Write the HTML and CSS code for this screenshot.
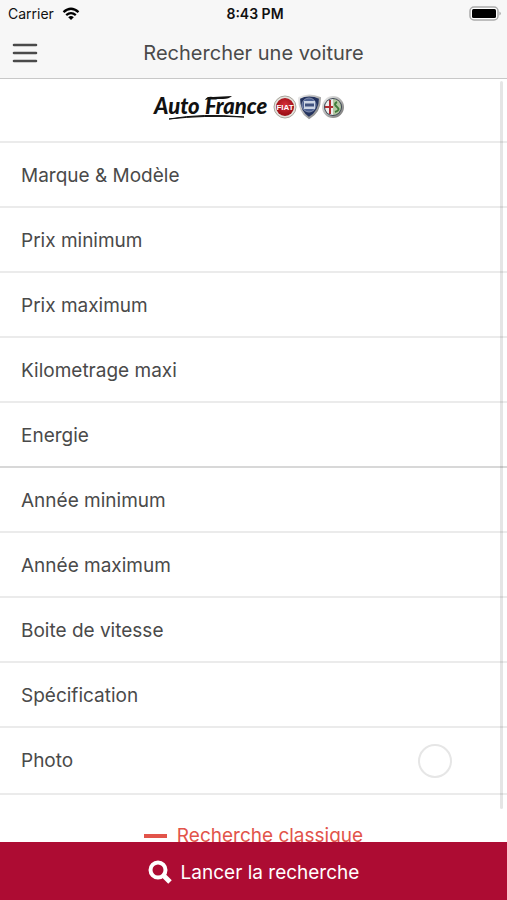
FILE: index.html
```
<!DOCTYPE html>
<html lang="fr">
<head>
    <meta charset="UTF-8">
    <meta name="viewport" content="width=device-width, initial-scale=1.0">
    <title>Rechercher une voiture</title>
    <link rel="stylesheet" href="styles.css">
</head>
<body>
    <header class="header">
        <div class="status-bar">
            <div class="carrier">
                <span>Carrier</span>
                <svg width="18" height="14" viewBox="0 0 18 14" aria-hidden="true">
                    <path d="M1.5 5.2Q9-1.6 16.5 5.2M4.2 8.2Q9 4 13.8 8.2" fill="none" stroke="#000" stroke-width="2.3"/>
                    <path d="M6.2 10.2Q9 8 11.8 10.2L9 13Z"/>
                </svg>
            </div>
            <div class="clock">8:43 PM</div>
            <div class="battery">
                <svg width="33" height="15" viewBox="0 0 33 15" aria-hidden="true">
                    <rect x="1" y="1" width="28" height="13" rx="4" fill="#fff" stroke="#aaa" stroke-width="1.5"/>
                    <rect x="3" y="3" width="24" height="9" rx="1.5"/>
                    <path d="M30.5 5.5Q33 7.5 30.5 9.5Z" fill="#999"/>
                </svg>
            </div>
        </div>
        <div class="nav-bar">
            <button class="menu-button" type="button" aria-label="Menu">
                <svg width="26" height="20" viewBox="0 0 26 20">
                    <path d="M2 2H24M2 10H24M2 18H24" stroke="#4a4a4a" stroke-width="2.6" stroke-linecap="round"/>
                </svg>
            </button>
            <h1 class="title">Rechercher une voiture</h1>
        </div>
    </header>

    <main class="content">
        <div class="brand">
            <svg class="brand-logo" width="192" height="28" viewBox="0 0 192 28" role="img" aria-label="Auto France">
                <defs>
                    <radialGradient id="red" cx="50%" cy="40%">
                        <stop offset="0" stop-color="#d8303a"/>
                        <stop offset="1" stop-color="#a01018"/>
                    </radialGradient>
                    <linearGradient id="chrome" x2="1" y2="1">
                        <stop offset="0" stop-color="#eee"/>
                        <stop offset="1" stop-color="#777"/>
                    </linearGradient>
                </defs>
                <text class="brand-name" x="1" y="21">Auto</text>
                <text class="brand-name" x="52" y="21">France</text>
                <path d="M52 7Q54 3 60 4L79 3Q76 6 70 6L56 6Z" fill="#111"/>
                <path d="M16 26Q50 20 91 24Q50 22 16 26Z" fill="#111" stroke="#111"/>
                <!-- Fiat -->
                <circle cx="132" cy="14" r="11" fill="#e4e2dc" stroke="#aaa69e"/>
                <circle cx="132" cy="14" r="9" fill="url(#red)"/>
                <text class="fiat" x="132" y="17" text-anchor="middle">FIAT</text>
                <!-- Lancia -->
                <path d="M146 5Q156 0 167 5Q167 19 156 25Q146 19 146 5Z" fill="#25345f" stroke="url(#chrome)" stroke-width="2"/>
                <circle cx="156" cy="12" r="7" fill="#4f6293" stroke="#8490b0"/>
                <path d="M151 8H162V16H151Z" fill="#cdd5e4"/>
                <path d="M152 12H161" stroke="#40517e" stroke-width="3"/>
                <!-- Alfa Romeo -->
                <circle cx="180" cy="14" r="10" fill="#3c4652" stroke="url(#chrome)" stroke-width="2"/>
                <path d="M180 6A8 8 0 0 0 180 22Z" fill="#eee"/>
                <path d="M180 6A8 8 0 0 1 180 22Z" fill="#b5c8a4"/>
                <path d="M177 7V21M172 14H180" stroke="#b02c32" stroke-width="2"/>
                <path d="M184 9Q180 11 184 14T182 19" fill="none" stroke="#3f7b3b" stroke-width="2"/>
            </svg>
        </div>

        <form id="search-form" class="criteria">
            <button class="row" type="button">Marque &amp; Modèle</button>
            <button class="row" type="button">Prix minimum</button>
            <button class="row" type="button">Prix maximum</button>
            <button class="row" type="button">Kilometrage maxi</button>
            <button class="row row-group-end" type="button">Energie</button>
            <button class="row" type="button">Année minimum</button>
            <button class="row" type="button">Année maximum</button>
            <button class="row" type="button">Boite de vitesse</button>
            <button class="row" type="button">Spécification</button>
            <div class="row row-photo">
                <label for="photo">Photo</label>
                <input class="toggle" type="checkbox" id="photo">
            </div>
        </form>

        <a class="classic-link" href="#"><span class="minus"></span>Recherche classique</a>
        <div class="scroll-indicator"></div>
    </main>

    <button class="submit" type="submit" form="search-form">
        <svg width="24" height="24" viewBox="0 0 24 24" aria-hidden="true">
            <circle cx="10" cy="10" r="7.5" fill="none" stroke="#fff" stroke-width="4"/>
            <path d="M15 15L22 22" stroke="#fff" stroke-width="5"/>
        </svg>
        Lancer la recherche
    </button>
</body>
</html>
```

FILE: styles.css
```
* {
    box-sizing: border-box;
}

body {
    display: flex;
    flex-direction: column;
    height: 100vh;
    margin: 0;
    background-color: #fff;
    color: #4a4a4a;
    font-family: Inter, "Liberation Sans", sans-serif;
    font-size: 19px;
}

button {
    border: none;
    background: none;
    color: inherit;
    font: inherit;
    cursor: pointer;
}

/* Header */
.header {
    flex: none;
    background-color: #f7f7f7;
    border-bottom: 1px solid #c8c8c8;
}

.status-bar {
    display: grid;
    grid-template-columns: 1fr auto 1fr;
    align-items: center;
    height: 27px;
    padding: 0 5px 0 8px;
    color: #111;
    font-size: 14px;
}

.carrier {
    display: flex;
    align-items: center;
    gap: 8px;
}

.clock {
    font-weight: 600;
}

.battery {
    display: flex;
    justify-content: flex-end;
}

.nav-bar {
    display: grid;
    grid-template-columns: 50px 1fr 50px;
    align-items: center;
    height: 51px;
}

.menu-button {
    display: flex;
    padding: 0 0 0 12px;
}

.title {
    margin: 0;
    font-size: 20px;
    font-weight: 400;
    text-align: center;
}

/* Search criteria */
.content {
    position: relative;
    flex: 1;
    min-height: 0;
    overflow: hidden;
}

.brand {
    display: flex;
    align-items: center;
    justify-content: center;
    height: 64px;
    padding: 0 10px 6px 0;
    border-bottom: 2px solid #ebebeb;
}

.brand-logo {
    overflow: visible;
}

.brand-name {
    font-family: Lato, sans-serif;
    font-size: 22px;
    font-style: italic;
    font-weight: 900;
    fill: #111;
}

.fiat {
    font-family: "Liberation Sans", sans-serif;
    font-size: 8px;
    font-weight: 700;
    fill: #fff;
}

.row {
    display: flex;
    align-items: center;
    justify-content: space-between;
    width: 100%;
    height: 65px;
    padding: 1px 55px 0 21px;
    border-bottom: 2px solid #ebebeb;
    text-align: left;
}

.row-group-end {
    border-bottom-color: #d8d8d8;
}

.row-photo {
    height: 67px;
    padding-top: 0;
}

.toggle {
    width: 34px;
    height: 34px;
    margin: 0;
    appearance: none;
    border: 2px solid #e6e6e6;
    border-radius: 50%;
    background-color: #fff;
}

.toggle:checked {
    background-color: #ad0c33;
}

.classic-link {
    display: flex;
    align-items: center;
    justify-content: center;
    gap: 10px;
    padding-top: 29px;
    color: #e2544a;
    text-decoration: none;
}

.minus {
    width: 23px;
    height: 4px;
    background-color: #e2544a;
}

.scroll-indicator {
    position: absolute;
    top: 2px;
    right: 4px;
    bottom: 33px;
    width: 3px;
    border-radius: 2px;
    background-color: rgba(0, 0, 0, 0.1);
}

/* Bottom action */
.submit {
    display: flex;
    flex: none;
    align-items: center;
    justify-content: center;
    gap: 9px;
    height: 58px;
    padding-top: 3px;
    background-color: #ad0c33;
    color: #fff;
}
```
